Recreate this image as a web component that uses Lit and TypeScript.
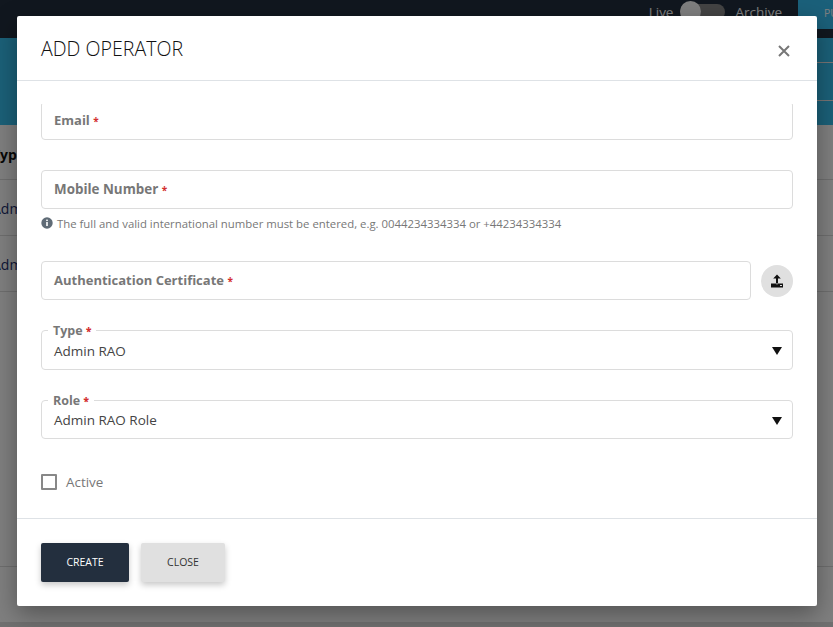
import { LitElement, html, css } from "lit";
import { customElement } from "lit/decorators.js";

@customElement("app-root")
export class AppRoot extends LitElement {
  static styles = css`
    :host { display: block; width: 833px; height: 627px; overflow: hidden; position: relative; font-family: "Open Sans", "Noto Sans", sans-serif; background: #fff; }
    .page { display: flex; flex-direction: column; height: 627px; }
    .top { height: 38px; background: #232f3e; display: flex; align-items: flex-start; justify-content: flex-end; flex: none; }
    .live { display: flex; align-items: center; gap: 7px; height: 24px; margin-right: 16px; color: #fff; font-size: 13.5px; }
    .live .archive { margin-left: 5px; }
    .switch { width: 45px; height: 16px; border-radius: 8px; background: #888; position: relative; margin-right: -2px; }
    .knob { position: absolute; left: 0; top: -3px; width: 21px; height: 21px; border-radius: 50%; background: #fff; }
    .pub { width: 35px; height: 29px; background: #36c0f4; color: #fff; font-size: 10.5px; padding: 6px 0 0 26px; box-sizing: border-box; overflow: hidden; white-space: nowrap; }
    .band { height: 87px; flex: none; background: #36c0f0; display: flex; flex-direction: column; align-items: flex-end; padding-top: 24px; box-sizing: border-box; gap: 37px; }
    .band i { display: block; width: 16px; height: 1px; background: #f0e8e8; }
    .table { flex: 1; font-size: 14px; color: #232f6e; display: flex; flex-direction: column; }
    .tr { height: 56px; border-bottom: 1px solid #ddd; box-sizing: border-box; display: flex; align-items: center; white-space: nowrap; flex: none; padding-top: 1px; }
    .tr span { margin-left: -8px; }
    .th { height: 55px; font-weight: 700; color: #111; padding-top: 5px; }
    .tr.tall { height: 275px; }
    .tr.rest { height: 55px; border-bottom: 0; }
    .strip { flex: 1; background: #e0e0e0; }

    .backdrop { position: absolute; inset: 0; background: rgba(0, 0, 0, 0.5); }
    .modal { position: absolute; left: 17px; top: 16px; width: 800px; height: 590px; background: #fff; border-radius: 2px; box-shadow: 0 8px 24px rgba(0, 0, 0, 0.35); display: flex; flex-direction: column; color: #222; }
    .head { height: 65px; flex: none; box-sizing: border-box; border-bottom: 1px solid #dee2e6; display: flex; align-items: center; justify-content: space-between; padding: 0 24px; }
    h2 { margin: 0; font-size: 19.6px; font-weight: 300; color: #111; line-height: 1; position: relative; top: 1px; }
    .x { width: 16px; height: 16px; margin-right: 1px; margin-top: 5px; display: block; }
    .body { flex: 1; min-height: 0; padding: 23px 24px 0; }
    .scroll { height: 414px; overflow: hidden; }
    .field { display: flex; align-items: center; box-sizing: border-box; height: 39px; border: 1px solid #dcdcdc; border-radius: 4px; padding: 0 12px 2px; font-size: 13px; font-weight: 700; color: #777; background: #fff; }
    .field b { color: #d32f2f; margin-left: 3.5px; font-weight: 700; font-size: 10px; position: relative; top: 1px; }
    .email { margin-top: -3px; margin-bottom: 30px; }
    .mobile { font-size: 13.4px; }
    .hint { display: flex; align-items: center; gap: 4px; font-size: 11.36px; color: #777; height: 16px; margin-top: 6px; margin-bottom: 30px; }
    .hint svg { width: 12px; height: 12px; flex: none; }
    .upload-row { display: flex; align-items: center; gap: 10px; margin-bottom: 30px; }
    .upload-row .field { flex: 1; }
    .upload { width: 32px; height: 32px; border-radius: 50%; background: #e0e0e0; display: flex; align-items: center; justify-content: center; flex: none; }
    .upload svg { width: 14px; height: 14px; }
    .select { position: relative; box-sizing: border-box; height: 39px; border: 1px solid #dcdcdc; border-radius: 4px; padding: 0 12px; display: flex; align-items: center; font-size: 13.5px; color: #444; margin-bottom: 31px; }
    .select.type { height: 40px; margin-bottom: 30px; padding-top: 2px; }
    .legend { position: absolute; left: 6px; top: -8px; background: #fff; padding: 0 5px; font-size: 12.5px; line-height: 15px; font-weight: 700; color: #777; }
    .legend b { color: #d32f2f; font-size: 10px; }
    .caret { position: absolute; right: 10px; top: 16px; width: 0; height: 0; border-left: 5px solid transparent; border-right: 5px solid transparent; border-top: 8px solid #111; }
    .check { display: flex; align-items: center; gap: 9px; font-size: 13.4px; color: #777; margin-top: 34px; }
    .box { width: 16px; height: 16px; box-sizing: border-box; border: 2px solid #888; border-radius: 1px; }
    .foot { height: 88px; flex: none; box-sizing: border-box; border-top: 1px solid #dee2e6; display: flex; align-items: center; gap: 12px; padding: 0 24px 1px; }
    button { font-family: inherit; border: 0; border-radius: 2px; font-size: 10.5px; height: 39px; padding: 0; text-transform: uppercase; box-shadow: 0 3px 6px rgba(0, 0, 0, 0.22); }
    .create { width: 88px; background: #232f3e; color: #fff; font-weight: 500; }
    .close { width: 84px; background: #e0e0e0; color: #333; }
  `;

  render() {
    return html`
      <div class="page">
        <div class="top">
          <div class="live"><span>Live</span><div class="switch"><div class="knob"></div></div><span class="archive">Archive</span></div>
          <div class="pub">PUBLISH</div>
        </div>
        <div class="band"><i></i><i></i></div>
        <div class="table">
          <div class="tr th"><span>Type</span></div>
          <div class="tr"><span>Admin RAO</span></div>
          <div class="tr"><span>Admin RAO</span></div>
          <div class="tr tall"></div>
          <div class="tr rest"></div>
          <div class="strip"></div>
        </div>
      </div>
      <div class="backdrop"></div>
      <div class="modal">
        <div class="head">
          <h2>ADD OPERATOR</h2>
          <svg class="x" viewBox="0 0 16 16"><path d="M3 3l10 10M13 3L3 13" stroke="#777" stroke-width="2" fill="none"/></svg>
        </div>
        <div class="body">
          <div class="scroll">
            <div class="field email">Email<b>*</b></div>
            <div class="field mobile">Mobile Number<b>*</b></div>
            <div class="hint">
              <svg viewBox="0 0 12 12"><circle cx="6" cy="6" r="5.7" fill="#5f6b76"/><rect x="5.2" y="5" width="1.6" height="4" fill="#fff"/><rect x="5.2" y="2.6" width="1.6" height="1.5" fill="#fff"/></svg>
              <span>The full and valid international number must be entered, e.g. 0044234334334 or +44234334334</span>
            </div>
            <div class="upload-row">
              <div class="field">Authentication Certificate<b>*</b></div>
              <div class="upload"><svg viewBox="0 0 14 14"><path d="M7 0.5L3.2 4.4H6V9.6H8V4.4h2.8z" fill="#111"/><path d="M1 9.6H6V10.2H8V9.6H13V13.5H1z" fill="#111"/><rect x="10" y="11" width="2" height="1" fill="#ddd"/></svg></div>
            </div>
            <div class="select type"><div class="legend">Type <b>*</b></div><span>Admin RAO</span><div class="caret"></div></div>
            <div class="select"><div class="legend">Role <b>*</b></div><span>Admin RAO Role</span><div class="caret"></div></div>
            <div class="check"><div class="box"></div><span>Active</span></div>
          </div>
        </div>
        <div class="foot">
          <button class="create">Create</button>
          <button class="close">Close</button>
        </div>
      </div>
    `;
  }
}
